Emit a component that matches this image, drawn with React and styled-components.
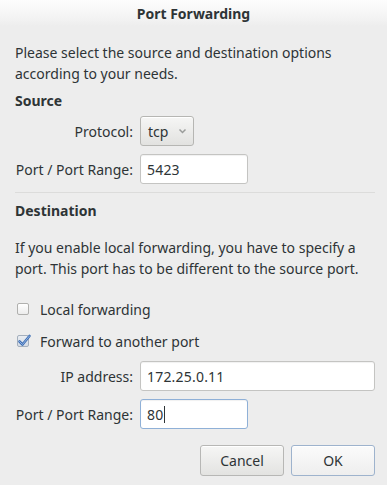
import React from "react";
import styled, { createGlobalStyle } from "styled-components";

const Global = createGlobalStyle`
  html, body { margin: 0; padding: 0; background: #ededed; }
  body { font-family: "Noto Sans", "DejaVu Sans", sans-serif; font-size: 14px; color: #2e3436; }
  * { box-sizing: border-box; }
`;

const Window = styled.div`
  width: 387px;
  height: 485px;
  background: #ededed;
  display: flex;
  flex-direction: column;
  overflow: hidden;
`;

const TitleBar = styled.div`
  height: 26px;
  flex: none;
  display: flex;
  align-items: center;
  justify-content: center;
  font-weight: bold;
  font-size: 14px;
  color: #2e3436;
  background: linear-gradient(#fdfdfd 0%, #f3f3f3 70%, #ededed 100%);
`;

const Body = styled.div`
  display: flex;
  flex-direction: column;
  padding: 15.5px 12px 0 15px;
`;

const Para = styled.p`
  margin: 0 0 ${(p) => p.$mb || 0}px 0;
  line-height: 21px;
`;

const Heading = styled.div`
  font-weight: bold;
  line-height: 21px;
  margin-bottom: ${(p) => p.$mb || 0}px;
`;

const FormGrid = styled.div`
  display: grid;
  grid-template-columns: 118px 1fr;
  column-gap: 7px;
  row-gap: 8px;
  align-items: center;
  margin-bottom: ${(p) => p.$mb || 0}px;
`;

const Label = styled.label`
  text-align: right;
  white-space: nowrap;
`;

const Combo = styled.div`
  width: 54px;
  height: 30px;
  border: 1px solid #b6b6b3;
  border-radius: 3px;
  background: linear-gradient(#f6f6f5, #e2e2e0);
  display: flex;
  align-items: center;
  padding-left: 7px;
  gap: 10px;
  box-shadow: inset 0 1px #ffffff;
`;

const Field = styled.div`
  width: ${(p) => p.$w}px;
  height: 30px;
  background: #ffffff;
  border: 1px solid ${(p) => (p.$focus ? "#8fb0d7" : "#c4c4c2")};
  border-radius: 3px;
  box-shadow: inset 0 1px 1px rgba(0, 0, 0, 0.06);
  display: flex;
  align-items: center;
  padding-left: 6px;
  letter-spacing: 0.2px;
`;

const Caret = styled.span`
  display: inline-block;
  width: 1px;
  height: 17px;
  background: #2e3436;
  margin-left: 1px;
`;

const Separator = styled.div`
  height: 1px;
  background: #dcdcdb;
  margin-bottom: 6.5px;
`;

const CheckRow = styled.div`
  height: 22px;
  display: flex;
  align-items: center;
  gap: 11px;
  padding-left: 2px;
  margin-bottom: ${(p) => p.$mb || 0}px;
`;

const Box = styled.span`
  position: relative;
  width: 12px;
  height: 12px;
  flex: none;
  border: 1px solid ${(p) => (p.$checked ? "#a4afbd" : "#b0b0ae")};
  border-radius: 2px;
  background: ${(p) => (p.$checked ? "linear-gradient(#e9edf2, #d5dce6)" : "linear-gradient(#ffffff, #ececec)")};
`;

const Tick = styled.svg`
  position: absolute;
  left: -1px;
  top: -3px;
`;

const ButtonRow = styled.div`
  display: flex;
  justify-content: flex-end;
  gap: 7px;
  margin-top: 16px;
`;

const Button = styled.button`
  width: 84px;
  height: 31px;
  font-family: inherit;
  font-size: 14px;
  color: #2e3436;
  border-radius: 3px;
  border: 1px solid ${(p) => (p.$default ? "#9eb3cd" : "#b7b7b5")};
  background: ${(p) => (p.$default ? "linear-gradient(#fbfbfb, #eeeeee)" : "linear-gradient(#f6f6f5, #e3e3e1)")};
  box-shadow: inset 0 1px #ffffff;
  padding: 0;
`;

function Chevron() {
  return (
    <svg width="9" height="6" viewBox="0 0 9 6">
      <path d="M1.5 1.5 L4.5 4.5 L7.5 1.5" fill="none" stroke="#9a9c9a" strokeWidth="1.5" />
    </svg>
  );
}

function Check({ checked }) {
  return (
    <Box $checked={checked}>
      {checked && (
        <Tick width="15" height="15" viewBox="0 0 15 15">
          <path d="M2.5 8.5 L5.5 11.5 L12.5 3" fill="none" stroke="#3f6fb4" strokeWidth="2.6" strokeLinecap="round" strokeLinejoin="round" />
          <path d="M2.5 8.5 L5.5 11.5 L12.5 3" fill="none" stroke="#8fb2e3" strokeWidth="1" strokeLinecap="round" strokeLinejoin="round" />
        </Tick>
      )}
    </Box>
  );
}

export default function App() {
  return (
    <>
      <Global />
      <Window>
        <TitleBar>Port Forwarding</TitleBar>
        <Body>
          <Para $mb={6}>
            Please select the source and destination options
            <br />
            according to your needs.
          </Para>
          <Heading $mb={5.5}>Source</Heading>
          <FormGrid $mb={8}>
            <Label>Protocol:</Label>
            <Combo>
              <span>tcp</span>
              <Chevron />
            </Combo>
            <Label>Port / Port Range:</Label>
            <Field $w={108}>5423</Field>
          </FormGrid>
          <Separator />
          <Heading $mb={16}>Destination</Heading>
          <Para $mb={19.5}>
            If you enable local forwarding, you have to specify a
            <br />
            port. This port has to be different to the source port.
          </Para>
          <CheckRow $mb={10}>
            <Check checked={false} />
            <span>Local forwarding</span>
          </CheckRow>
          <CheckRow $mb={9}>
            <Check checked />
            <span>Forward to another port</span>
          </CheckRow>
          <FormGrid>
            <Label>IP address:</Label>
            <Field $w={235}>172.25.0.11</Field>
            <Label>Port / Port Range:</Label>
            <Field $w={108} $focus>
              80
              <Caret />
            </Field>
          </FormGrid>
          <ButtonRow>
            <Button>Cancel</Button>
            <Button $default>OK</Button>
          </ButtonRow>
        </Body>
      </Window>
    </>
  );
}
